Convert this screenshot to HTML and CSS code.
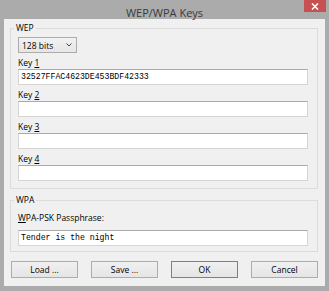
FILE: index.html
```html
<!DOCTYPE html>
<html lang="en">
<head>
  <meta charset="UTF-8" />
  <title>WEP/WPA Keys</title>
  <link rel="stylesheet" href="styles.css">
</head>
<body>
  <div class="window">
    <div class="titlebar">
      <span class="title">WEP/WPA Keys</span>
      <span class="close">
        <svg width="8" height="7" viewBox="0 0 8 7"><path d="M1 0.5 L7 6.5 M7 0.5 L1 6.5" stroke="#fff" stroke-width="1.6"/></svg>
      </span>
    </div>

    <div class="client">
      <fieldset class="group wep">
        <legend>WEP</legend>
        <div class="select">
          <span>128 bits</span>
          <svg width="6" height="4" viewBox="0 0 6 4"><path d="M0.5 0.5 L3 3 L5.5 0.5" fill="none" stroke="#444" stroke-width="1"/></svg>
        </div>
        <div class="label">Key <u>1</u></div>
        <div class="input mono">32527FFAC4623DE453BDF42333</div>
        <div class="label">Key <u>2</u></div>
        <div class="input mono"></div>
        <div class="label">Key <u>3</u></div>
        <div class="input mono"></div>
        <div class="label">Key <u>4</u></div>
        <div class="input mono"></div>
      </fieldset>

      <fieldset class="group wpa">
        <legend>WPA</legend>
        <div class="label pass"><u>W</u>PA-PSK Passphrase:</div>
        <div class="input mono">Tender is the night</div>
      </fieldset>

      <div class="buttons">
        <button class="btn">Load ...</button>
        <button class="btn">Save ...</button>
        <button class="btn default">OK</button>
        <button class="btn">Cancel</button>
      </div>
    </div>
  </div>
</body>
</html>
```

FILE: styles.css
```css
* { margin: 0; padding: 0; box-sizing: border-box; }
body {
  font-family: 'Open Sans', 'Noto Sans', sans-serif;
  background: #ababab;
}
.window {
  width: 329px;
  height: 291px;
  background: #ababab;
  padding: 19px 4px 5px 4px;
  position: relative;
  overflow: hidden;
}
.titlebar {
  position: absolute;
  top: 0; left: 0;
  width: 100%;
  height: 19px;
  text-align: center;
}
.title {
  font-size: 11px;
  line-height: 19px;
  color: #3a3a3a;
}
.close {
  position: absolute;
  top: 0; right: 3px;
  width: 22px;
  height: 12px;
  background: #c75050;
  display: flex;
  align-items: center;
  justify-content: center;
}
.client {
  height: 100%;
  background: #f0f0f0;
  padding: 3px 7px 0 6px;
  font-size: 8.5px;
  color: #000;
}
.group {
  border: 1px solid #dcdcdc;
  padding: 3px 9px 7px 7px;
}
.group legend {
  font-size: 8.5px;
  line-height: 12px;
  padding: 0 2px;
  margin-left: -4px;
}
.wpa {
  margin-top: 5px;
  padding-top: 5px;
  padding-bottom: 5px;
}
.select {
  width: 59px;
  height: 16px;
  border: 1px solid #acacac;
  background: linear-gradient(#f2f2f2, #e6e6e6);
  display: flex;
  align-items: center;
  justify-content: space-between;
  padding: 0 4px 0 3px;
}
.label {
  margin-top: 3px;
  line-height: 13px;
}
.label.pass {
  margin-top: 0;
  margin-bottom: 6px;
}
.input {
  width: 290px;
  height: 16px;
  background: #fff;
  border: 1px solid #d5d5d5;
  border-top-color: #ababab;
  padding-left: 2px;
  line-height: 14px;
}
.mono {
  font-family: 'Liberation Mono', monospace;
  font-size: 8.2px;
}
.buttons {
  display: flex;
  justify-content: space-between;
  margin-top: 9px;
  padding-left: 1px;
}
.btn {
  width: 67px;
  height: 17px;
  border: 1px solid #acacac;
  background: linear-gradient(#f0f0f0, #e5e5e5);
  font-family: 'Open Sans', 'Noto Sans', sans-serif;
  font-size: 8.5px;
  color: #000;
}
.btn.default {
  border-color: #3c8fe6;
}
```
